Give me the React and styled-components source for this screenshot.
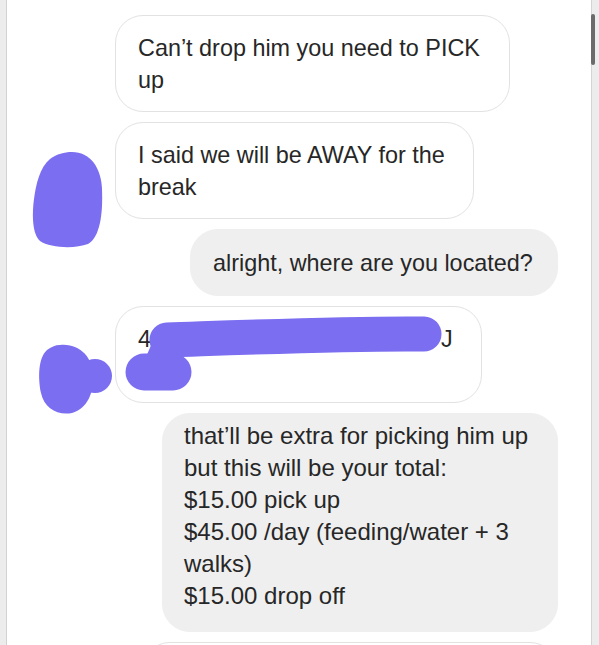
import React from "react";
import styled, { createGlobalStyle } from "styled-components";

const PURPLE = "#7b6ef1";

const Global = createGlobalStyle`
  html, body {
    margin: 0;
    padding: 0;
    background: #fff;
    overflow: hidden;
  }
`;

const Frame = styled.div`
  display: flex;
  height: 645px;
  overflow: hidden;
  font-family: "Liberation Sans", Arial, sans-serif;
`;

const LeftEdge = styled.div`
  width: 7px;
  flex: none;
  background: linear-gradient(to right, #ececec 0 6px, #d2d2d2 6px 7px);
`;

const RightEdge = styled.div`
  width: 7px;
  flex: none;
  background: #ececec;
  border-left: 1px solid #d4d4d4;
`;

const Thumb = styled.div`
  width: 4px;
  height: 51px;
  margin: 14px 0 0 -1px;
  border-radius: 2px;
  background: #6b6b6b;
`;

const Feed = styled.div`
  flex: 1;
  display: flex;
  flex-direction: column;
  gap: 10px;
  padding: 15px 33px 0 0;
`;

const Row = styled.div`
  display: flex;
  align-items: flex-start;
  justify-content: ${(p) => (p.$out ? "flex-end" : "flex-start")};
`;

const AvatarSlot = styled.div`
  width: 108px;
  flex: none;
  svg {
    display: block;
    width: 108px;
    height: 1px;
    overflow: visible;
  }
`;

const Bubble = styled.div`
  position: relative;
  box-sizing: border-box;
  width: ${(p) => p.$w}px;
  padding: ${(p) => p.$pad || "16px 20px 15px 22px"};
  border-radius: 28px;
  background: ${(p) => (p.$out ? "#efefef" : "#fff")};
  border: 1px solid ${(p) => (p.$out ? "#efefef" : "#e2e2e2")};
  color: #272727;
  font-size: ${(p) => p.$size || 23.4}px;
  line-height: 32px;
  white-space: nowrap;
`;

const Hidden = styled.span`
  display: inline-block;
  width: ${(p) => p.$w}px;
`;

const Scribble = styled.svg`
  position: absolute;
  left: -1px;
  top: -1px;
  width: 100%;
  height: 100%;
  overflow: visible;
  pointer-events: none;
`;

const AvatarBlob = () => (
  <svg>
    <path
      fill={PURPLE}
      d="M65 30 C83 30, 94 45, 95 67 C96 92, 93 115, 81 122 C68 127, 43 126, 33 119 C25 112, 25 92, 27 77 C29 62, 33 45, 43 37 C50 32, 57 30, 65 30 Z"
    />
  </svg>
);

const AvatarBlobTwo = () => (
  <svg>
    <path
      fill={PURPLE}
      d="M53 39 C73 37, 85 52, 86 67 C87 87, 81 102, 65 107 C51 110, 37 102, 34 87 C31 72, 31 52, 40 44 C44 41, 48 39, 53 39 Z"
    />
    <circle cx="88" cy="70" r="17" fill={PURPLE} />
  </svg>
);

export default function App() {
  return (
    <>
      <Global />
      <Frame>
        <LeftEdge />
        <Feed>
          <Row>
            <AvatarSlot />
            <Bubble $w={395}>
              Can’t drop him you need to PICK
              <br />
              up
            </Bubble>
          </Row>

          <Row>
            <AvatarSlot>
              <AvatarBlob />
            </AvatarSlot>
            <Bubble $w={359}>
              I said we will be AWAY for the
              <br />
              break
            </Bubble>
          </Row>

          <Row $out>
            <Bubble $out $w={368} $pad="17px 20px 16px 22px">
              alright, where are you located?
            </Bubble>
          </Row>

          <Row>
            <AvatarSlot>
              <AvatarBlobTwo />
            </AvatarSlot>
            <Bubble $w={367}>
              4<Hidden $w={290} />J
              <br />
              &nbsp;
              <Scribble>
                <g stroke={PURPLE} strokeLinecap="round" fill="none">
                  <path d="M52 34 C140 31, 240 27, 309 28" strokeWidth="35" />
                  <path d="M50 40 L42 58" strokeWidth="26" />
                  <path d="M29 66 L58 66" strokeWidth="37" />
                </g>
              </Scribble>
            </Bubble>
          </Row>

          <Row $out>
            <Bubble $out $w={396} $size={24} $pad="6px 20px 19px 21px">
              that’ll be extra for picking him up
              <br />
              but this will be your total:
              <br />
              $15.00 pick up
              <br />
              $45.00 /day (feeding/water + 3
              <br />
              walks)
              <br />
              $15.00 drop off
            </Bubble>
          </Row>

          <Row $out>
            <Bubble $w={416}>&nbsp;</Bubble>
          </Row>
        </Feed>
        <RightEdge>
          <Thumb />
        </RightEdge>
      </Frame>
    </>
  );
}
